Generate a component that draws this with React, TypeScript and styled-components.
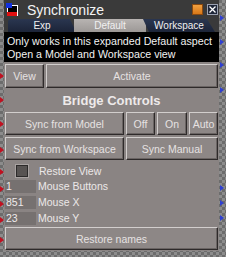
import React from 'react';
import styled, { createGlobalStyle } from 'styled-components';

const GlobalStyle = createGlobalStyle`
  html, body {
    margin: 0;
    padding: 0;
  }
  body {
    font-family: "Liberation Sans", Arial, sans-serif;
  }
`;

const Canvas = styled.div`
  position: relative;
  width: 226px;
  height: 257px;
  overflow: hidden;
  background-color: #8c8c8c;
  background-image: conic-gradient(#6c6c6c 25%, #8c8c8c 0 50%, #6c6c6c 0 75%, #8c8c8c 0);
  background-size: 6px 6px;
`;

const Window = styled.div`
  margin-left: 4px;
  width: 215px;
  display: flex;
  flex-direction: column;
`;

const TitleBar = styled.div`
  height: 19px;
  display: flex;
  align-items: center;
  padding: 0 1px 0 2px;
  background: #3a3a3a;
`;

const Title = styled.span`
  margin-left: 8px;
  flex: 1;
  color: #f4f4f4;
  font-size: 14px;
`;

const OrangeBox = styled.div`
  width: 11px;
  height: 11px;
  margin-right: 4px;
  background: linear-gradient(#f0a040, #d87818);
  border: 1px solid #8a4a10;
  box-sizing: border-box;
`;

const CloseBox = styled.div`
  width: 11px;
  height: 11px;
  display: flex;
  align-items: center;
  justify-content: center;
  background: #1e2638;
  border: 1px solid #9aa0b0;
  box-sizing: border-box;
`;

const TabStrip = styled.div`
  height: 13px;
  display: flex;
  align-items: flex-end;
  padding-left: 4px;
  background: #3a3a3a;
`;

const Tab = styled.div<{ $active?: boolean; $w: number; $shape: string; $ml?: number }>`
  width: ${(p) => p.$w}px;
  height: 13px;
  margin-left: ${(p) => p.$ml ?? 0}px;
  display: flex;
  align-items: center;
  justify-content: center;
  font-size: 10px;
  color: #f0f0f0;
  background: ${(p) => (p.$active ? 'linear-gradient(#b8b4b2, #9c9896)' : 'linear-gradient(#2a3650, #1c2438)')};
  clip-path: ${(p) => p.$shape};
  border-radius: ${(p) => (p.$ml ? 0 : 3)}px 0 0 0;
`;

const Info = styled.div`
  height: 30px;
  padding: 3px 0 0 3px;
  box-sizing: border-box;
  background: #000;
  color: #f2f2f2;
  font-size: 10.7px;
  line-height: 13px;
  white-space: nowrap;
`;

const Panel = styled.div`
  background: #8a8483;
  padding: 2px 1px 1px 1px;
  display: flex;
  flex-direction: column;
`;

const Row = styled.div<{ $cols: string; $h: number; $mt?: number }>`
  display: grid;
  grid-template-columns: ${(p) => p.$cols};
  column-gap: 2px;
  height: ${(p) => p.$h}px;
  margin-top: ${(p) => p.$mt ?? 0}px;
`;

const Button = styled.div`
  display: flex;
  align-items: center;
  justify-content: center;
  box-sizing: border-box;
  background: #8d8786;
  border-top: 1px solid #d2cecd;
  border-left: 1px solid #d2cecd;
  border-right: 1px solid #2e2a2a;
  border-bottom: 1px solid #2e2a2a;
  box-shadow: inset -1px -1px 0 #6a6463;
  color: #e6e2e2;
  font-size: 10.5px;
  white-space: nowrap;
`;

const Heading = styled.div`
  height: 24px;
  display: flex;
  align-items: center;
  justify-content: center;
  color: #eeeaea;
  font-size: 13px;
  font-weight: bold;
`;

const CheckRow = styled.div`
  height: 15px;
  margin-top: 3px;
  display: flex;
  align-items: center;
  padding-left: 11px;
`;

const Check = styled.div`
  width: 12px;
  height: 12px;
  box-sizing: border-box;
  background: #575352;
  border: 1px solid #2c2a2a;
  box-shadow: 0 0 0 1px #a8a2a1;
`;

const Label = styled.span<{ $ml: number }>`
  margin-left: ${(p) => p.$ml}px;
  color: #ece8e8;
  font-size: 10.5px;
`;

const ValueRow = styled.div`
  height: 16px;
  display: flex;
  align-items: center;
`;

const Value = styled.div`
  width: 31px;
  height: 13px;
  box-sizing: border-box;
  padding-left: 1px;
  background: #767170;
  color: #eeeaea;
  font-size: 10.5px;
  line-height: 13px;
`;

const Pin = styled.div<{ $side: 'left' | 'right'; $color: string }>`
  position: absolute;
  left: ${(p) => (p.$side === 'left' ? 0 : 220)}px;
  width: 0;
  height: 0;
  border-top: 3px solid transparent;
  border-bottom: 3px solid transparent;
  border-left: 4px solid ${(p) => p.$color};
`;

const redPins = [76, 100, 124, 150, 172, 189, 204, 220, 240];
const bluePins = [18, 42, 65, 90, 188, 203, 218];

const AppIcon = () => (
  <svg width="13" height="14" viewBox="0 0 13 14">
    <rect x="1.5" y="2.5" width="10" height="10" fill="#000" stroke="#fff" />
    <rect x="0" y="0" width="6" height="5" fill="#1030e0" />
    <rect x="1" y="9" width="10" height="4" fill="#e01010" />
  </svg>
);

export default function App() {
  return (
    <>
      <GlobalStyle />
      <Canvas>
        <Window>
          <TitleBar>
            <AppIcon />
            <Title>Synchronize</Title>
            <OrangeBox />
            <CloseBox>
              <svg width="7" height="7" viewBox="0 0 7 7">
                <path d="M0.5 0.5 L6.5 6.5 M6.5 0.5 L0.5 6.5" stroke="#fff" strokeWidth="1.3" />
              </svg>
            </CloseBox>
          </TitleBar>
          <TabStrip>
            <Tab $w={68} $shape="polygon(0 0, 62px 0, 68px 100%, 0 100%)">Exp</Tab>
            <Tab $active $w={72} $ml={-2} $shape="polygon(0 0, 100% 0, 100% 100%, 0 100%)">
              Default
            </Tab>
            <Tab $w={72} $ml={-3} $shape="polygon(0 0, 64px 0, 72px 100%, 6px 100%)">
              Workspace
            </Tab>
          </TabStrip>
          <Info>
            Only works in this expanded Default aspect
            <br />
            Open a Model and Workspace view
          </Info>
          <Panel>
            <Row $cols="39px 1fr" $h={24}>
              <Button>View</Button>
              <Button>Activate</Button>
            </Row>
            <Heading>Bridge Controls</Heading>
            <Row $cols="119px 29px 30px 1fr" $h={23}>
              <Button>Sync from Model</Button>
              <Button>Off</Button>
              <Button>On</Button>
              <Button>Auto</Button>
            </Row>
            <Row $cols="119px 1fr" $h={23} $mt={2}>
              <Button>Sync from Workspace</Button>
              <Button>Sync Manual</Button>
            </Row>
            <CheckRow>
              <Check />
              <Label $ml={11}>Restore View</Label>
            </CheckRow>
            <ValueRow>
              <Value>1</Value>
              <Label $ml={2}>Mouse Buttons</Label>
            </ValueRow>
            <ValueRow>
              <Value>851</Value>
              <Label $ml={2}>Mouse X</Label>
            </ValueRow>
            <ValueRow>
              <Value>23</Value>
              <Label $ml={2}>Mouse Y</Label>
            </ValueRow>
            <Row $cols="1fr" $h={23} $mt={1}>
              <Button>Restore names</Button>
            </Row>
          </Panel>
        </Window>
        {redPins.map((y) => (
          <Pin key={`r${y}`} $side="left" $color="#c01020" style={{ top: y - 3 }} />
        ))}
        {bluePins.map((y) => (
          <Pin key={`b${y}`} $side="right" $color="#3040d0" style={{ top: y - 3 }} />
        ))}
      </Canvas>
    </>
  );
}
